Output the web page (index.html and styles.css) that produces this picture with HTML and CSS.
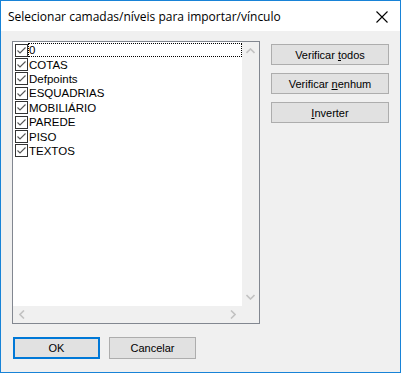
FILE: index.html
```html
<!DOCTYPE html>
<html>
<head>
<meta charset="utf-8">
<link rel="stylesheet" href="styles.css">
</head>
<body>
<div class="window">
  <div class="titlebar">
    <span class="title">Selecionar camadas/níveis para importar/vínculo</span>
    <svg class="close" width="12" height="12" viewBox="0 0 12 12"><path d="M0.5 0.5 L11.5 11.5 M11.5 0.5 L0.5 11.5" stroke="#000" stroke-width="1.1" fill="none"/></svg>
  </div>
  <div class="content">
    <div class="main">
      <div class="listbox">
        <div class="items">
          <div class="item focus"><span class="cb"><svg width="13" height="13" viewBox="0 0 13 13"><rect x="0.5" y="0.5" width="12" height="12" fill="#fff" stroke="#333"/><path d="M2.5 6.5 L5 9 L10.5 3.5" stroke="#555" stroke-width="1.1" fill="none"/></svg></span><span class="label">0</span></div>
          <div class="item"><span class="cb"><svg width="13" height="13" viewBox="0 0 13 13"><rect x="0.5" y="0.5" width="12" height="12" fill="#fff" stroke="#333"/><path d="M2.5 6.5 L5 9 L10.5 3.5" stroke="#555" stroke-width="1.1" fill="none"/></svg></span><span class="label">COTAS</span></div>
          <div class="item"><span class="cb"><svg width="13" height="13" viewBox="0 0 13 13"><rect x="0.5" y="0.5" width="12" height="12" fill="#fff" stroke="#333"/><path d="M2.5 6.5 L5 9 L10.5 3.5" stroke="#555" stroke-width="1.1" fill="none"/></svg></span><span class="label">Defpoints</span></div>
          <div class="item"><span class="cb"><svg width="13" height="13" viewBox="0 0 13 13"><rect x="0.5" y="0.5" width="12" height="12" fill="#fff" stroke="#333"/><path d="M2.5 6.5 L5 9 L10.5 3.5" stroke="#555" stroke-width="1.1" fill="none"/></svg></span><span class="label">ESQUADRIAS</span></div>
          <div class="item"><span class="cb"><svg width="13" height="13" viewBox="0 0 13 13"><rect x="0.5" y="0.5" width="12" height="12" fill="#fff" stroke="#333"/><path d="M2.5 6.5 L5 9 L10.5 3.5" stroke="#555" stroke-width="1.1" fill="none"/></svg></span><span class="label">MOBILIÁRIO</span></div>
          <div class="item"><span class="cb"><svg width="13" height="13" viewBox="0 0 13 13"><rect x="0.5" y="0.5" width="12" height="12" fill="#fff" stroke="#333"/><path d="M2.5 6.5 L5 9 L10.5 3.5" stroke="#555" stroke-width="1.1" fill="none"/></svg></span><span class="label">PAREDE</span></div>
          <div class="item"><span class="cb"><svg width="13" height="13" viewBox="0 0 13 13"><rect x="0.5" y="0.5" width="12" height="12" fill="#fff" stroke="#333"/><path d="M2.5 6.5 L5 9 L10.5 3.5" stroke="#555" stroke-width="1.1" fill="none"/></svg></span><span class="label">PISO</span></div>
          <div class="item"><span class="cb"><svg width="13" height="13" viewBox="0 0 13 13"><rect x="0.5" y="0.5" width="12" height="12" fill="#fff" stroke="#333"/><path d="M2.5 6.5 L5 9 L10.5 3.5" stroke="#555" stroke-width="1.1" fill="none"/></svg></span><span class="label">TEXTOS</span></div>
        </div>
        <div class="vscroll">
          <svg width="9" height="6" viewBox="0 0 9 6"><path d="M0.5 5 L4.5 1 L8.5 5" stroke="#c2c2c2" stroke-width="1.6" fill="none"/></svg>
          <svg width="9" height="6" viewBox="0 0 9 6"><path d="M0.5 1 L4.5 5 L8.5 1" stroke="#c2c2c2" stroke-width="1.6" fill="none"/></svg>
        </div>
        <div class="hscroll">
          <svg width="6" height="9" viewBox="0 0 6 9"><path d="M5 0.5 L1 4.5 L5 8.5" stroke="#c2c2c2" stroke-width="1.6" fill="none"/></svg>
          <svg width="6" height="9" viewBox="0 0 6 9"><path d="M1 0.5 L5 4.5 L1 8.5" stroke="#c2c2c2" stroke-width="1.6" fill="none"/></svg>
        </div>
        <div class="corner"></div>
      </div>
      <div class="side">
        <div class="btn"><span>Verificar <u>t</u>odos</span></div>
        <div class="btn"><span>Verificar <u>n</u>enhum</span></div>
        <div class="btn"><span><u>I</u>nverter</span></div>
      </div>
    </div>
    <div class="footer">
      <div class="btn small default"><span>OK</span></div>
      <div class="btn small"><span>Cancelar</span></div>
    </div>
  </div>
</div>
</body>
</html>
```
FILE: styles.css
```css
html, body {
  margin: 0;
  padding: 0;
  background: #f0f0f0;
}
.window {
  box-sizing: border-box;
  width: 401px;
  height: 373px;
  border: 1px solid #1883d7;
  background: #f0f0f0;
  display: flex;
  flex-direction: column;
  font-family: "Liberation Sans", Arial, sans-serif;
  font-size: 11px;
  color: #000;
}
.titlebar {
  height: 30px;
  background: #fff;
  display: flex;
  align-items: center;
  justify-content: space-between;
  padding: 0 12px 0 7px;
  flex: none;
}
.title {
  font-family: "Open Sans", "Noto Sans", sans-serif;
  font-size: 12px;
  color: #000;
  padding-top: 1px;
}
.close {
  display: block;
  margin-top: 1px;
}
.content {
  flex: 1;
  padding: 10px 11px 0 11px;
  display: flex;
  flex-direction: column;
}
.main {
  display: flex;
  gap: 11px;
}
.listbox {
  box-sizing: border-box;
  width: 248px;
  height: 283px;
  border: 1px solid #828790;
  background: #fff;
  display: grid;
  grid-template-columns: 1fr 17px;
  grid-template-rows: 1fr 17px;
}
.items {
  padding: 1px 0 0 2px;
  overflow: hidden;
}
.item {
  height: 14.4px;
  display: flex;
  align-items: center;
}
.cb {
  width: 13px;
  height: 13px;
  flex: none;
}
.cb svg {
  display: block;
}
.label {
  flex: 1;
  box-sizing: border-box;
  height: 14px;
  line-height: 14px;
  padding-left: 0;
  border: 1px solid transparent;
  display: flex;
  align-items: center;
  font-size: 11.5px;
}
.focus .label {
  border: 1px dotted #000;
}
.vscroll {
  background: #f0f0f0;
  display: flex;
  flex-direction: column;
  justify-content: space-between;
  align-items: center;
  padding: 6px 0 6px 0;
}
.vscroll svg, .hscroll svg {
  display: block;
}
.hscroll {
  background: #f0f0f0;
  display: flex;
  justify-content: space-between;
  align-items: center;
  padding: 0 6px;
}
.corner {
  background: #f0f0f0;
}
.side {
  display: flex;
  flex-direction: column;
  gap: 8px;
  padding-top: 3px;
}
.btn {
  box-sizing: border-box;
  width: 118px;
  height: 21px;
  border: 1px solid #adadad;
  background: #e1e1e1;
  display: flex;
  align-items: center;
  justify-content: center;
  color: #000;
}
.footer {
  display: flex;
  gap: 9px;
  margin-top: 13px;
  padding-left: 1px;
}
.btn.small {
  width: 87px;
  height: 22px;
}
.btn.default {
  border: 2px solid #0078d7;
}
```
